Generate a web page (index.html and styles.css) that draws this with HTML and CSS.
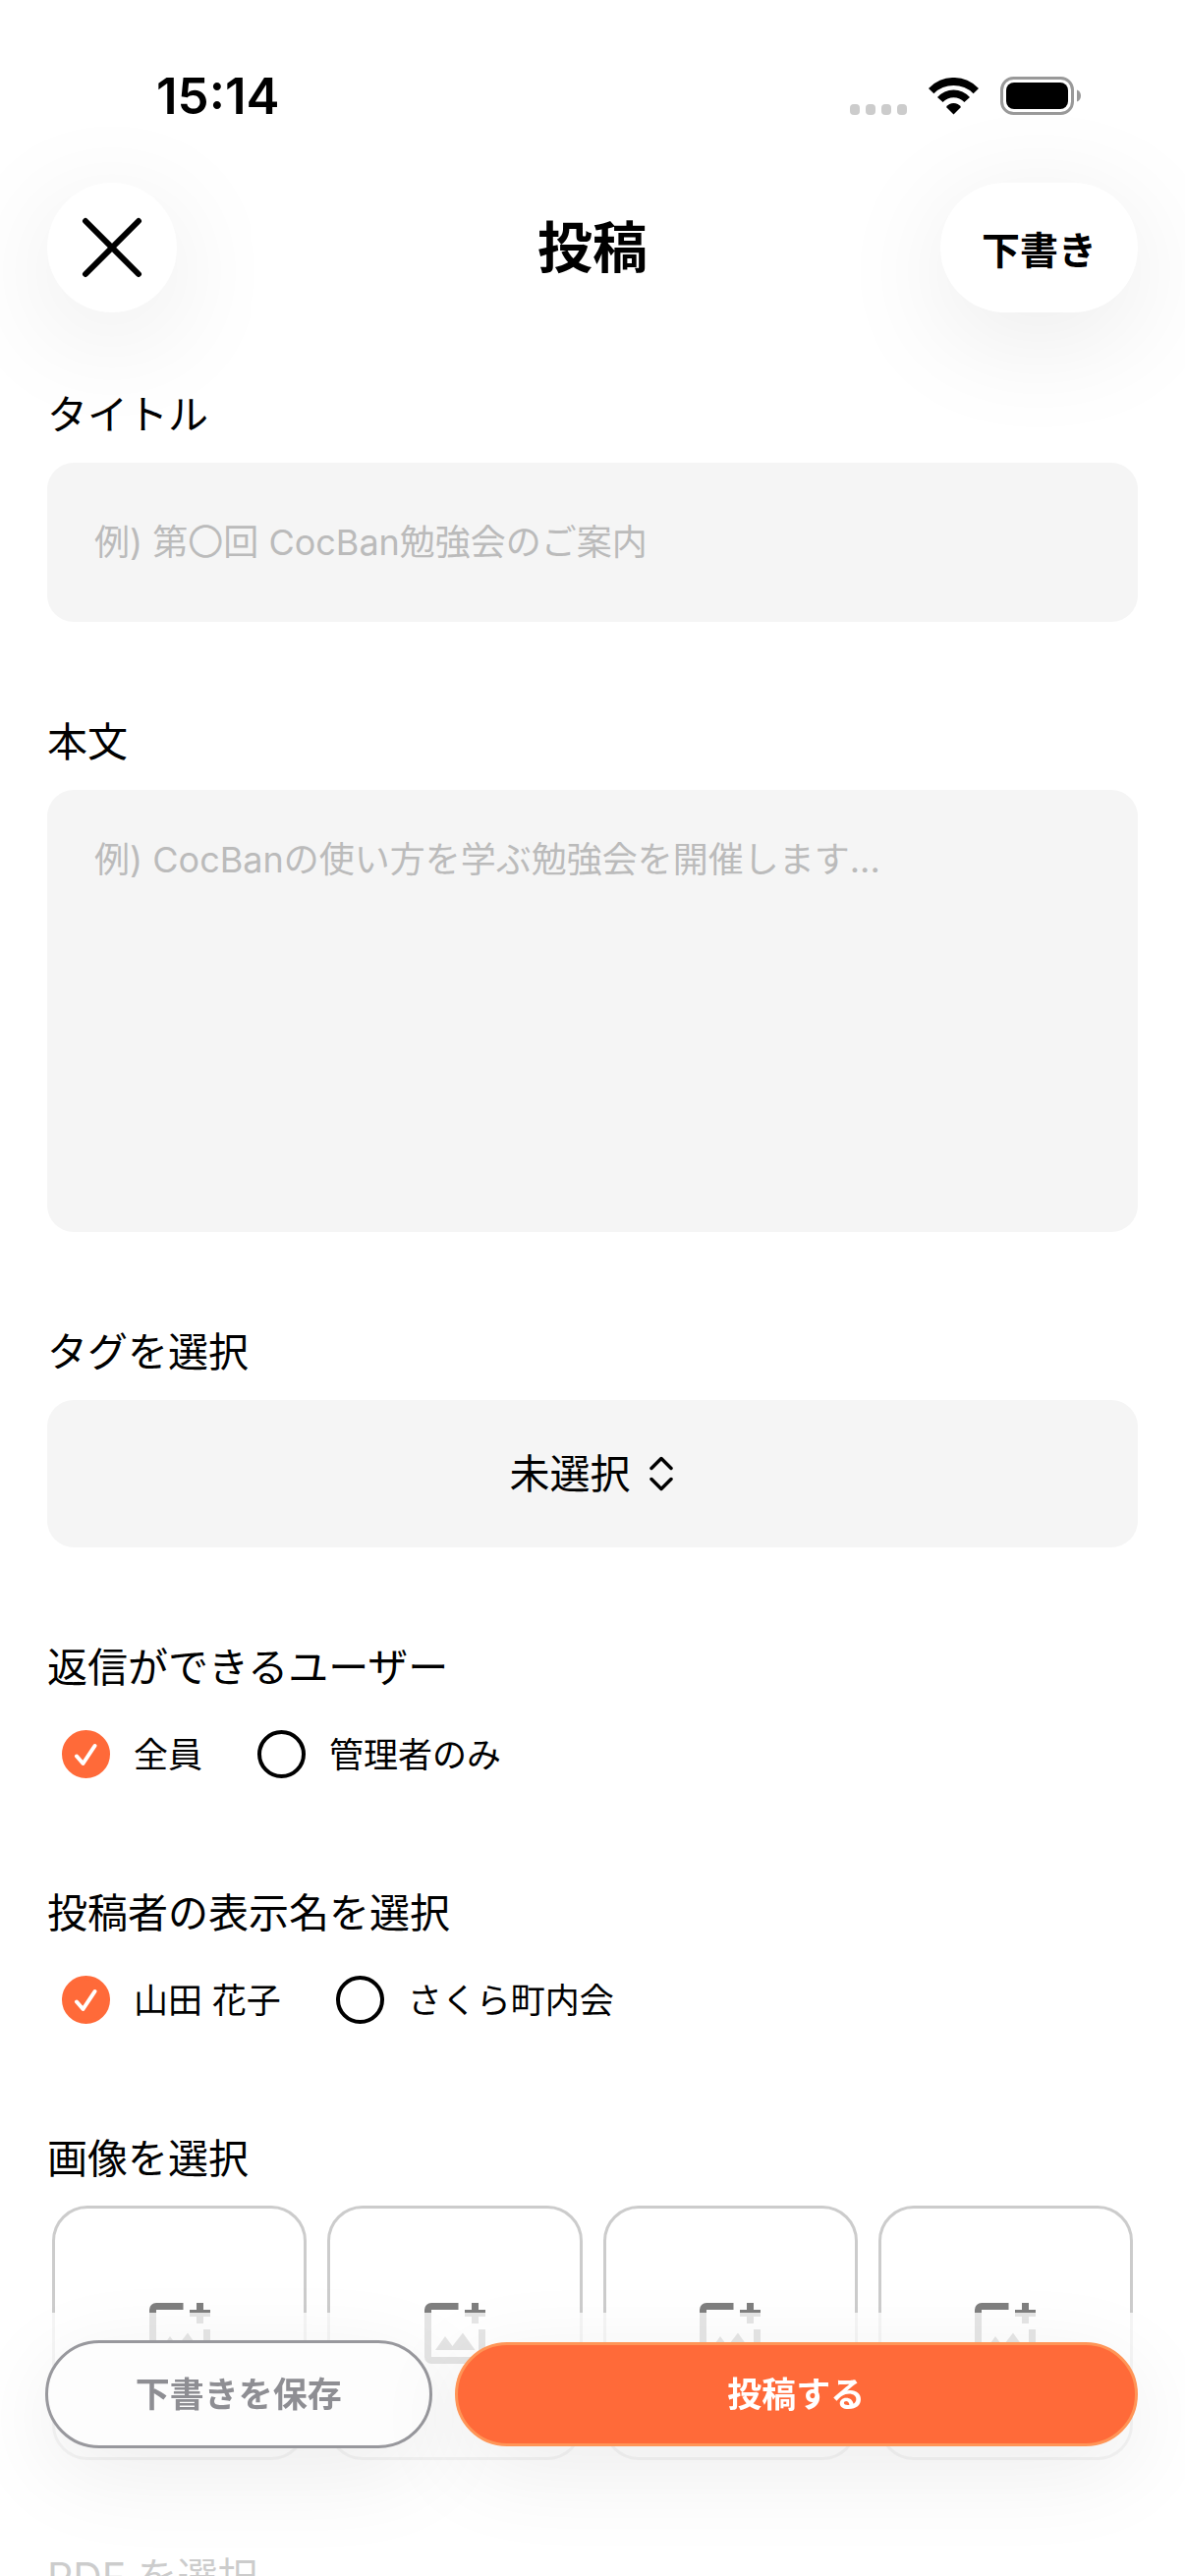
FILE: index.html
```html
<!DOCTYPE html>
<html lang="ja">
<head>
<meta charset="UTF-8">
<meta name="viewport" content="width=device-width, initial-scale=1.0">
<title>投稿</title>
<link rel="stylesheet" href="styles.css">
</head>
<body>
<div class="status-bar">
  <span class="time">15:14</span>
  <div class="status-icons">
    <svg class="signal" width="58" height="11" viewBox="0 0 58 11" fill="#ccc">
      <rect x="0" y="0" width="10" height="11" rx="4"/>
      <rect x="16" y="0" width="10" height="11" rx="4"/>
      <rect x="32" y="0" width="10" height="11" rx="4"/>
      <rect x="48" y="0" width="10" height="11" rx="4"/>
    </svg>
    <svg class="wifi" width="51" height="38" viewBox="0 0 51 38">
      <path d="M0 11A35 35 0 0 1 51 11L45.6 16.2A28.7 28.7 0 0 0 5.4 16.2Z"/>
      <path d="M9 20A21.9 21.9 0 0 1 42 20L36.4 25A15 15 0 0 0 14.6 25Z"/>
      <path d="M18 30A9 9 0 0 1 33 30L25.5 37.5Z"/>
    </svg>
    <svg class="battery" width="83" height="39" viewBox="0 0 83 39">
      <rect x="1.5" y="1.5" width="72" height="36" rx="12" fill="none" stroke="#999" stroke-width="3"/>
      <rect x="6" y="6" width="63" height="27" rx="8"/>
      <path d="M78 13.5C81 14.5 82 17 82 19.5S81 24.5 78 25.5Z" fill="#999"/>
    </svg>
  </div>
</div>

<header class="header">
  <button type="button" class="round-button close-button" aria-label="閉じる">
    <svg width="62" height="62" viewBox="0 0 62 62" fill="none" stroke="#000" stroke-width="6" stroke-linecap="round">
      <path d="M4 4L58 58M58 4L4 58"/>
    </svg>
  </button>
  <h1>投稿</h1>
  <button type="button" class="round-button drafts-button">下書き</button>
</header>

<form id="postForm" class="post-form">
  <div class="form-group">
    <label class="form-label" for="title">タイトル</label>
    <input type="text" id="title" name="title" class="field" placeholder="例) 第〇回 CocBan勉強会のご案内">
  </div>

  <div class="form-group">
    <label class="form-label" for="body">本文</label>
    <textarea id="body" name="body" class="field body-field" placeholder="例) CocBanの使い方を学ぶ勉強会を開催します..."></textarea>
  </div>

  <div class="form-group">
    <label class="form-label" for="tag">タグを選択</label>
    <div class="select-wrap">
      <select id="tag" name="tag" class="field tag-field">
        <option>未選択</option>
      </select>
      <svg class="select-arrow" width="24" height="36" viewBox="0 0 24 36" fill="none" stroke="#000" stroke-width="3.500" stroke-linecap="round" stroke-linejoin="round">
        <path d="M2 12.500L12 2.500L22 12.500M2 23.500L12 33.500L22 23.500"/>
      </svg>
    </div>
  </div>

  <fieldset class="form-group">
    <legend class="form-label">返信ができるユーザー</legend>
    <div class="radio-row">
      <label class="radio">
        <span class="radio-mark">
          <input type="radio" name="reply" value="all" checked>
          <svg viewBox="0 0 49 49"><path d="M15 26.500L21.500 34L33.500 16"/></svg>
        </span>
        全員
      </label>
      <label class="radio">
        <span class="radio-mark">
          <input type="radio" name="reply" value="admin">
          <svg viewBox="0 0 49 49"><path d="M15 26.500L21.500 34L33.500 16"/></svg>
        </span>
        管理者のみ
      </label>
    </div>
  </fieldset>

  <fieldset class="form-group">
    <legend class="form-label">投稿者の表示名を選択</legend>
    <div class="radio-row">
      <label class="radio">
        <span class="radio-mark">
          <input type="radio" name="author" value="user" checked>
          <svg viewBox="0 0 49 49"><path d="M15 26.500L21.500 34L33.500 16"/></svg>
        </span>
        山田 花子
      </label>
      <label class="radio">
        <span class="radio-mark">
          <input type="radio" name="author" value="group">
          <svg viewBox="0 0 49 49"><path d="M15 26.500L21.500 34L33.500 16"/></svg>
        </span>
        さくら町内会
      </label>
    </div>
  </fieldset>

  <div class="form-group">
    <h2 class="form-label">画像を選択</h2>
    <div class="image-grid">
      <button type="button" class="image-tile" aria-label="画像を追加">
        <svg viewBox="0 0 62 62"><use href="#add-image"/></svg>
      </button>
      <button type="button" class="image-tile" aria-label="画像を追加">
        <svg viewBox="0 0 62 62"><use href="#add-image"/></svg>
      </button>
      <button type="button" class="image-tile" aria-label="画像を追加">
        <svg viewBox="0 0 62 62"><use href="#add-image"/></svg>
      </button>
      <button type="button" class="image-tile" aria-label="画像を追加">
        <svg viewBox="0 0 62 62"><use href="#add-image"/></svg>
      </button>
    </div>
  </div>

  <div class="form-group">
    <h2 class="form-label">PDF を選択</h2>
  </div>
</form>

<div class="action-bar">
  <button type="button" class="action save-button">下書きを保存</button>
  <button type="submit" form="postForm" class="action submit-button">投稿する</button>
</div>

<!-- Shared icon -->
<svg class="sprite" width="0" height="0">
  <symbol id="add-image" viewBox="0 0 62 62">
    <path d="M34.500 3.500H7A3.500 3.500 0 0 0 3.500 7V55A3.500 3.500 0 0 0 7 58.500H55A3.500 3.500 0 0 0 58.500 55V27" fill="none" stroke="#7f7f7f" stroke-width="7"/>
    <path d="M51.500 0V21M41 10.500H62" fill="none" stroke="#7f7f7f" stroke-width="7"/>
    <path d="M11 48L21 34L28.500 44L39 30.500L51.500 48Z" fill="#7f7f7f"/>
  </symbol>
</svg>
</body>
</html>
```
FILE: styles.css
```css
* {
    box-sizing: border-box;
}

body {
    margin: 0;
    height: 100vh;
    overflow: hidden;
    background-color: #fff;
    color: #000;
    font-family: Inter, "Noto Sans CJK JP", sans-serif;
}

button,
input,
select,
textarea {
    margin: 0;
    font-family: inherit;
    color: inherit;
}

button {
    padding: 0;
    border: none;
    cursor: pointer;
}

/* Status bar */
.status-bar {
    display: flex;
    justify-content: space-between;
    align-items: center;
    height: 124px;
    padding: 71px 105px 0 159px;
}

.time {
    font-size: 51px;
    line-height: 53px;
    font-weight: 600;
}

.status-icons {
    display: flex;
    align-items: flex-end;
    gap: 22px;
}

/* Header */
.header {
    display: grid;
    grid-template-columns: 1fr auto 1fr;
    align-items: center;
    padding: 62px 48px 0;
}

.header h1 {
    margin: 0;
    font-size: 56px;
    line-height: 64px;
    font-weight: 700;
}

.round-button {
    display: flex;
    align-items: center;
    justify-content: center;
    height: 132px;
    border-radius: 66px;
    background-color: #fff;
    box-shadow: 0 24px 120px rgba(0, 0, 0, 0.09);
}

.close-button {
    width: 132px;
}

.drafts-button {
    justify-self: end;
    padding: 0 42px;
    font-size: 39px;
    font-weight: 700;
}

/* Form */
.post-form {
    display: flex;
    flex-direction: column;
    gap: 97px;
    padding: 79px 48px 0;
}

.form-group {
    min-width: 0;
    margin: 0;
    padding: 0;
    border: none;
}

.form-label {
    display: block;
    margin: 0 0 24px;
    padding: 0;
    font-size: 41px;
    line-height: 50px;
    font-weight: 400;
}

.field {
    display: block;
    width: 100%;
    height: 162px;
    padding: 0 48px;
    border: none;
    border-radius: 27px;
    background-color: #f5f5f5;
    font-size: 36px;
}

.field::placeholder {
    color: #bbb;
    opacity: 1;
}

.body-field {
    height: 450px;
    padding: 46px 48px;
    line-height: 50px;
    resize: none;
}

.select-wrap {
    position: relative;
}

.tag-field {
    height: 150px;
    padding: 0 94px 0 48px;
    appearance: none;
    font-size: 41px;
    text-align: center;
    text-align-last: center;
}

.select-arrow {
    position: absolute;
    top: 57px;
    left: calc(50% + 58px);
    pointer-events: none;
}

/* Radio buttons */
.radio-row {
    display: flex;
    gap: 56px;
    padding: 15px;
}

.radio {
    display: flex;
    align-items: center;
    gap: 24px;
    font-size: 35px;
    line-height: 48px;
}

.radio-mark {
    display: grid;
    width: 49px;
    height: 49px;
}

.radio-mark input,
.radio-mark svg {
    grid-area: 1 / 1;
    width: 49px;
    height: 49px;
}

.radio-mark input {
    appearance: none;
    border: 4px solid #000;
    border-radius: 50%;
}

.radio-mark input:checked {
    border-color: #ff6a39;
    background-color: #ff6a39;
}

.radio-mark svg {
    visibility: hidden;
    pointer-events: none;
    fill: none;
    stroke: #fff;
    stroke-width: 4;
    stroke-linecap: round;
    stroke-linejoin: round;
}

.radio-mark input:checked + svg {
    visibility: visible;
}

/* Images */
.image-grid {
    display: grid;
    grid-template-columns: repeat(4, 1fr);
    gap: 27px;
    padding: 2px 8px 0;
}

.image-tile {
    display: flex;
    align-items: center;
    justify-content: center;
    aspect-ratio: 1;
    border-radius: 33px;
    outline: 3px solid #ccc;
    background-color: transparent;
}

.image-tile svg {
    width: 62px;
    height: 62px;
}

/* Buttons over the bottom of the form */
.action-bar {
    position: fixed;
    left: 0;
    right: 0;
    bottom: 0;
    display: flex;
    align-items: center;
    gap: 23px;
    padding: 28px 48px 130px 46px;
    background-color: rgba(255, 255, 255, 0.8);
}

.action {
    height: 106px;
    border-radius: 55px;
    box-shadow: 0 24px 96px rgba(0, 0, 0, 0.08);
    font-size: 35px;
    line-height: 48px;
    font-weight: 700;
}

.save-button {
    flex: 9 1 0;
    height: 110px;
    border: 3px solid #98989d;
    background-color: #fdfdfd;
    color: #8e8e93;
}

.submit-button {
    flex: 16 1 0;
    border: 3px solid #ff9557;
    background-color: #ff6a39;
    color: #fff;
}

.sprite {
    position: absolute;
}
```
